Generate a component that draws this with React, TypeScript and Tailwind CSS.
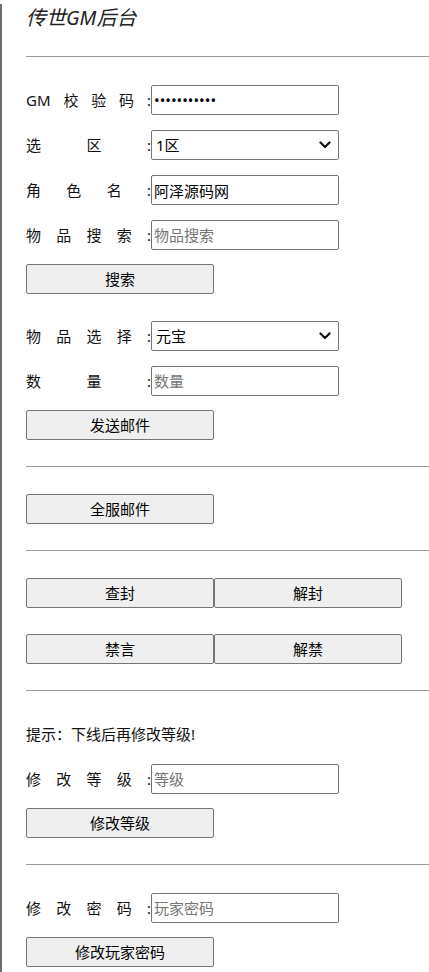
import { useState } from "react";

const Label = ({ chars }: { chars: string[] }) => (
  <div className="flex w-[125px] shrink-0 justify-between">
    {[...chars, ":"].map((c, i) => (
      <span key={i}>{c}</span>
    ))}
  </div>
);

const inputCls =
  "h-[30px] w-[188px] rounded-[2px] border border-[#767676] bg-white px-[2px] text-[15px] text-black outline-none placeholder:text-[#757575]";

const Btn = ({ children }: { children: string }) => (
  <button className="h-[30px] w-[188px] rounded-[2px] border border-[#767676] bg-[#efefef] text-[15px] text-black">
    {children}
  </button>
);

const Chevron = () => (
  <svg
    className="pointer-events-none absolute right-[8px] top-1/2 -translate-y-1/2"
    width="12"
    height="8"
    viewBox="0 0 12 8"
    fill="none"
  >
    <path d="M1.5 1.5 6 6l4.5-4.5" stroke="#111" strokeWidth="2.2" strokeLinecap="round" strokeLinejoin="round" />
  </svg>
);

const Select = ({ options, value, onChange }: { options: string[]; value: string; onChange: (v: string) => void }) => (
  <div className="relative">
    <select
      value={value}
      onChange={(e) => onChange(e.target.value)}
      className="h-[30px] w-[188px] appearance-none rounded-[2px] border border-[#767676] bg-white pl-[4px] text-[15px] text-black outline-none"
    >
      {options.map((o) => (
        <option key={o}>{o}</option>
      ))}
    </select>
    <Chevron />
  </div>
);

const Hr = ({ className }: { className: string }) => <div className={`h-px bg-[#9a9a9a] ${className}`} />;

export default function App() {
  const [zone, setZone] = useState("1区");
  const [item, setItem] = useState("元宝");

  return (
    <div className="min-h-screen border-l-2 border-[#6e6e6e] bg-white pb-2 pl-6 font-['Noto_Sans','Noto_Sans_CJK_SC',sans-serif] text-[15px] leading-[22px] text-[#111]">
      <h3 className="mt-1 h-7 text-[20px] font-normal italic leading-7 text-[#222]">传世GM后台</h3>
      <Hr className="mt-6" />

      <div className="mt-[28px] flex h-[30px] items-center">
        <Label chars={["GM", "校", "验", "码"]} />
        <input type="password" defaultValue="12345678901" className={inputCls} />
      </div>
      <div className="mt-[15px] flex h-[30px] items-center">
        <Label chars={["选", "区"]} />
        <Select options={["1区", "2区", "3区"]} value={zone} onChange={setZone} />
      </div>
      <div className="mt-[15px] flex h-[30px] items-center">
        <Label chars={["角", "色", "名"]} />
        <input type="text" defaultValue="阿泽源码网" className={inputCls} />
      </div>
      <div className="mt-[15px] flex h-[30px] items-center">
        <Label chars={["物", "品", "搜", "索"]} />
        <input type="text" placeholder="物品搜索" className={inputCls} />
      </div>
      <div className="mt-[14px]">
        <Btn>搜索</Btn>
      </div>

      <div className="mt-[27px] flex h-[30px] items-center">
        <Label chars={["物", "品", "选", "择"]} />
        <Select options={["元宝", "金币", "经验"]} value={item} onChange={setItem} />
      </div>
      <div className="mt-[15px] flex h-[30px] items-center">
        <Label chars={["数", "量"]} />
        <input type="text" placeholder="数量" className={inputCls} />
      </div>
      <div className="mt-[14px]">
        <Btn>发送邮件</Btn>
      </div>

      <Hr className="mt-[26px]" />
      <div className="mt-[27px]">
        <Btn>全服邮件</Btn>
      </div>

      <Hr className="mt-[26px]" />
      <div className="mt-[27px] flex">
        <Btn>查封</Btn>
        <Btn>解封</Btn>
      </div>
      <div className="mt-[26px] flex">
        <Btn>禁言</Btn>
        <Btn>解禁</Btn>
      </div>

      <Hr className="mt-[26px]" />
      <p className="mt-[32px]">提示：下线后再修改等级!</p>
      <div className="mt-[19px] flex h-[30px] items-center">
        <Label chars={["修", "改", "等", "级"]} />
        <input type="text" placeholder="等级" className={inputCls} />
      </div>
      <div className="mt-[14px]">
        <Btn>修改等级</Btn>
      </div>

      <Hr className="mt-[26px]" />
      <div className="mt-[28px] flex h-[30px] items-center">
        <Label chars={["修", "改", "密", "码"]} />
        <input type="text" placeholder="玩家密码" className={inputCls} />
      </div>
      <div className="mt-[14px]">
        <Btn>修改玩家密码</Btn>
      </div>
    </div>
  );
}
